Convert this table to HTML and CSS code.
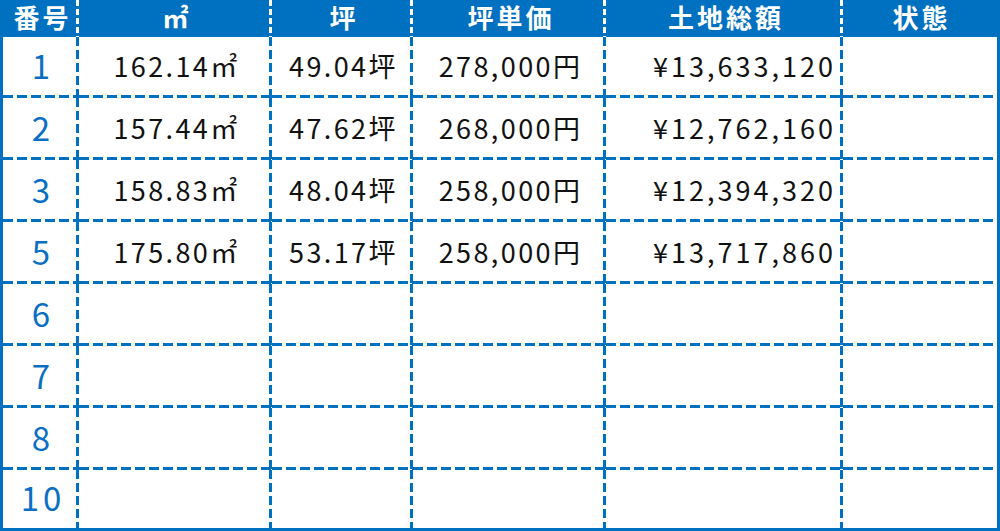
FILE: index.html
```html
<!DOCTYPE html>
<html lang="ja">
<head>
<meta charset="utf-8">
<link rel="stylesheet" href="styles.css">
</head>
<body>
<div class="sheet">
  <div class="cell head">番号</div>
  <div class="cell head">㎡</div>
  <div class="cell head">坪</div>
  <div class="cell head">坪単価</div>
  <div class="cell head">土地総額</div>
  <div class="cell head last-col">状態</div>

  <div class="cell no">1</div>
  <div class="cell val">162.14㎡</div>
  <div class="cell val">49.04坪</div>
  <div class="cell val">278,000円</div>
  <div class="cell val total">¥13,633,120</div>
  <div class="cell last-col"></div>

  <div class="cell no">2</div>
  <div class="cell val">157.44㎡</div>
  <div class="cell val">47.62坪</div>
  <div class="cell val">268,000円</div>
  <div class="cell val total">¥12,762,160</div>
  <div class="cell last-col"></div>

  <div class="cell no">3</div>
  <div class="cell val">158.83㎡</div>
  <div class="cell val">48.04坪</div>
  <div class="cell val">258,000円</div>
  <div class="cell val total">¥12,394,320</div>
  <div class="cell last-col"></div>

  <div class="cell no">5</div>
  <div class="cell val">175.80㎡</div>
  <div class="cell val">53.17坪</div>
  <div class="cell val">258,000円</div>
  <div class="cell val total">¥13,717,860</div>
  <div class="cell last-col"></div>

  <div class="cell no">6</div>
  <div class="cell"></div>
  <div class="cell"></div>
  <div class="cell"></div>
  <div class="cell"></div>
  <div class="cell last-col"></div>

  <div class="cell no">7</div>
  <div class="cell"></div>
  <div class="cell"></div>
  <div class="cell"></div>
  <div class="cell"></div>
  <div class="cell last-col"></div>

  <div class="cell no">8</div>
  <div class="cell"></div>
  <div class="cell"></div>
  <div class="cell"></div>
  <div class="cell"></div>
  <div class="cell last-col"></div>

  <div class="cell no last-row">10</div>
  <div class="cell last-row"></div>
  <div class="cell last-row"></div>
  <div class="cell last-row"></div>
  <div class="cell last-row"></div>
  <div class="cell last-row last-col"></div>
</div>
</body>
</html>
```

FILE: styles.css
```css
html, body {
  margin: 0;
  padding: 0;
  background: #ffffff;
}

.sheet {
  width: 1000px;
  height: 531px;
  box-sizing: border-box;
  border: 3px solid #0070c0;
  border-top: 0;
  display: grid;
  grid-template-columns: 76px 193px 141px 193px 237px 1fr;
  grid-template-rows: 37px 61px repeat(6, 62px) 1fr;
  font-family: "Noto Sans CJK JP", "Noto Sans", sans-serif;
  line-height: 1.15;
}

.cell {
  display: flex;
  align-items: center;
  justify-content: center;
  padding-bottom: 3px;
  box-sizing: border-box;
  white-space: nowrap;
  background-image:
    repeating-linear-gradient(to bottom, #0070c0 0 9px, transparent 9px 13px),
    repeating-linear-gradient(to right, #0070c0 0 10px, transparent 10px 14px);
  background-size: 3px 100%, 100% 3px;
  background-position: right top, left bottom;
  background-repeat: no-repeat;
}

.cell.last-col {
  background-image:
    none,
    repeating-linear-gradient(to right, #0070c0 0 10px, transparent 10px 14px);
}

.cell.last-row {
  background-image:
    repeating-linear-gradient(to bottom, #0070c0 0 9px, transparent 9px 13px),
    none;
}

.cell.last-row.last-col {
  background-image: none;
}

.head {
  background-color: #0070c0;
  background-image:
    repeating-linear-gradient(to bottom, #ffffff 0 6px, transparent 6px 9px);
  background-size: 3px 100%;
  background-position: right top;
  color: #ffffff;
  font-weight: 700;
  font-size: 26px;
  line-height: 1;
  letter-spacing: 3px;
  padding-top: 1px;
  padding-bottom: 4px;
  padding-left: 3px;
}

.head.last-col {
  background-image: none;
}

.no {
  color: #0a6fc2;
  font-size: 33px;
  font-weight: 400;
  letter-spacing: 4px;
  padding-left: 4px;
}

.val {
  color: #111111;
  font-size: 27px;
  letter-spacing: 2.4px;
  padding-left: 2px;
}

.total {
  justify-content: flex-end;
  letter-spacing: 3px;
  padding-right: 7px;
}
```
